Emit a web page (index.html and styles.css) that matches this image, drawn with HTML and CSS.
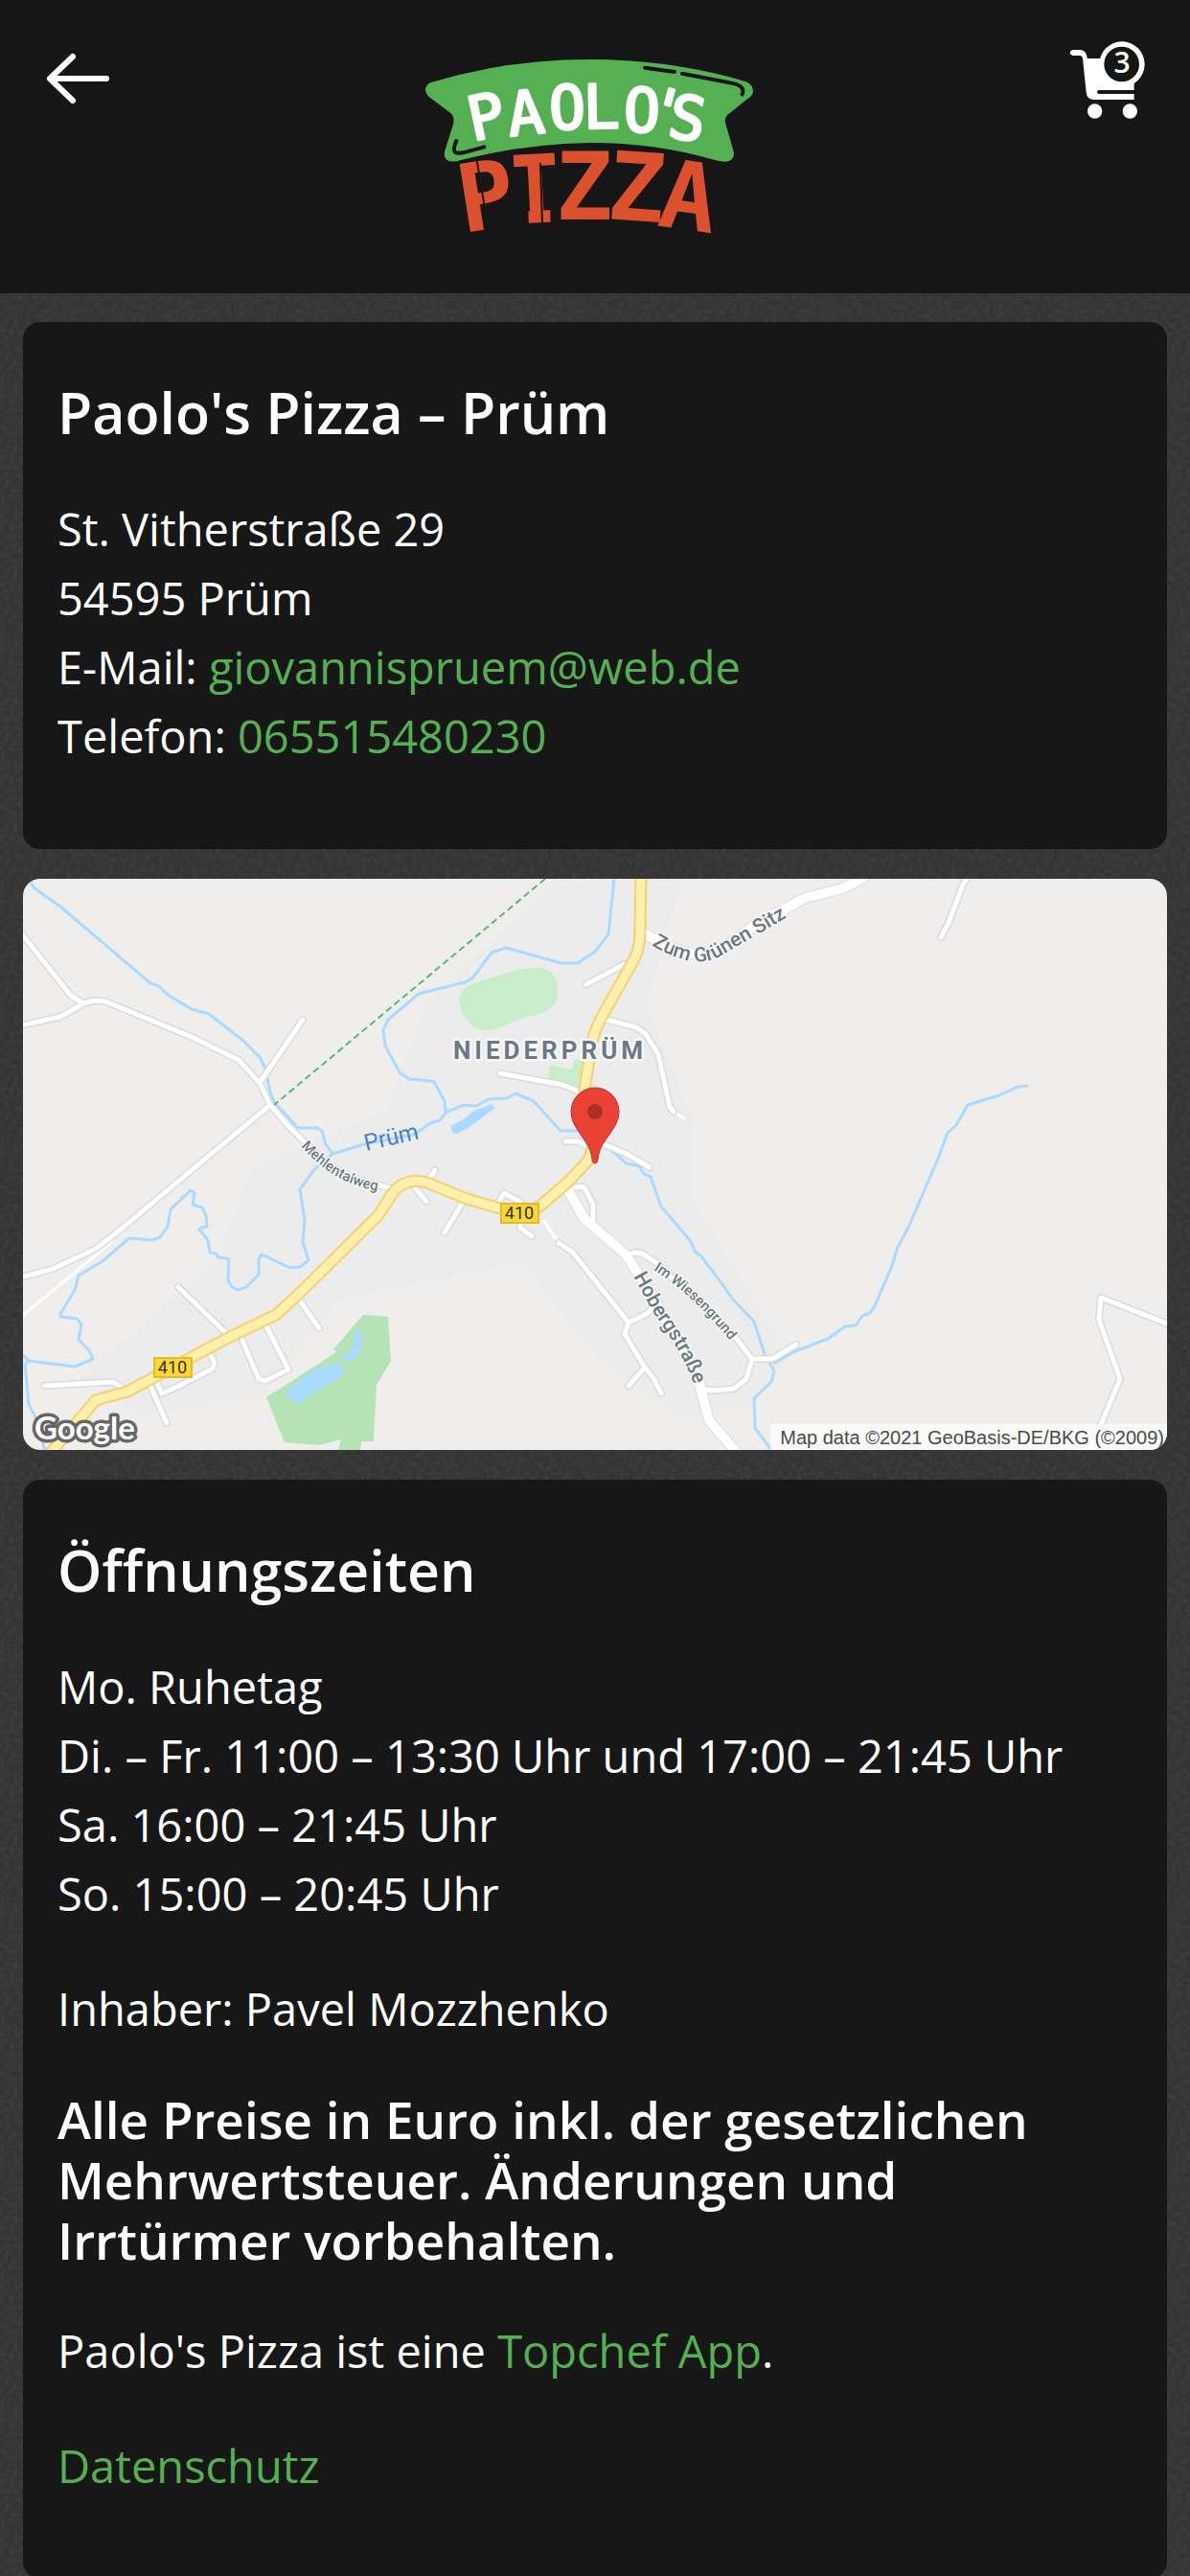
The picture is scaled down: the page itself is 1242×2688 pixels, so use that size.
FILE: index.html
```
<!DOCTYPE html>
<html lang="de">

<head>
	<meta charset="UTF-8" />
	<meta name="viewport" content="width=device-width,initial-scale=1" />
	<title>Paolo's Pizza – Prüm</title>
	<link rel="stylesheet" href="styles.css">
</head>

<body>
	<header class="topbar">
		<button class="icon-btn" type="button" aria-label="Zurück">
			<svg class="icon-back" viewBox="0 0 72 60" aria-hidden="true">
				<path d="M65 30H6M30 7L6 30L30 53" />
			</svg>
		</button>

		<svg class="logo" viewBox="18 0 1110 600" role="img" aria-label="Paolo's Pizza">
			<path class="logo-banner" d="M62 107Q300 36 555 36Q815 36 1046 106Q1068 114 1068 137Q1066 150 1050 160L990 208Q978 218 981 234L1008 328Q1008 354 984 356Q965 357 940 349Q760 297 560 297Q350 300 150 352Q125 360 108 350Q98 340 103 322L130 236Q132 214 122 205L52 152Q42 142 42 130Q44 112 62 107Z" />
			<path class="logo-line" d="M729 62L822 75M846 80L1010 112Q1044 122 1034 145" />
			<path class="logo-line" d="M139 291Q128 315 134 325Q140 332 160 328L226 310" />
			<text class="logo-name" x="190 306 431 537 661 722 795" y="292 276 256 252 260 248 276" rotate="-12 -6 -2 -1 2 15 10">PAOLO'S</text>
			<text class="logo-pizza" x="160 304" y="580 552" rotate="-9 -3">PI</text>
			<path class="logo-cut" d="M312 396L360 393L366 566H322ZM430 389L470 386V560H434Z" />
			<text class="logo-pizza" x="450 608 764" y="538 534 556" rotate="0 4 8">ZZA</text>
			<path class="logo-line thin" d="M203 352L240 574M402 362L408 550" />
		</svg>

		<button class="icon-btn cart" type="button" aria-label="Warenkorb">
			<svg class="icon-cart" viewBox="105 65 240 250" aria-hidden="true">
				<path d="M116 94H140Q158 96 162 121H308V250H182Q160 250 158 226L147 121Q146 112 137 112H116Q107 109 107 103Q108 95 116 94Z" />
				<path class="cut" d="M310 220H198Q192 222 192 226Q193 232 198 232H310" />
				<circle cx="185" cy="286" r="23" />
				<circle cx="295" cy="286" r="23" />
				<circle cx="270" cy="139" r="71" />
				<circle class="cut" cx="269" cy="139" r="55" />
				<text class="cart-count" x="270" y="165" text-anchor="middle">3</text>
			</svg>
		</button>
	</header>

	<main class="content">
		<section class="card">
			<h1>Paolo's Pizza – Prüm</h1>
			<p>
				St. Vitherstraße 29<br>
				54595 Prüm<br>
				E-Mail: <a href="mailto:giovannispruem@web.de">giovannispruem@web.de</a><br>
				Telefon: <a href="tel:065515480230">065515480230</a>
			</p>
		</section>

		<svg class="map" viewBox="0 0 1194 596" role="img" aria-label="Karte von Niederprüm">
			<defs>
				<path id="main-road" d="M645 -6L644 54Q644 70 639 82L604 144Q596 160 594 170L586 220L597 270Q592 290 589 295L568 317L539 342Q530 348 519 348L498 344L463 334L424 318Q408 312 396 319Q391 321 386 328L371 351L286 435L264 455L214 479L109 535L76 544L28 600" />
				<path id="sitz" d="M656 69Q700 96 727 81L796 41" />
				<path id="mehlen" d="M290 279Q328 322 376 326" />
				<path id="hoberg" d="M637 415L660 456Q692 500 701 530" />
				<path id="wiesen" d="M658 408Q702 436 742 487" />
				<g id="streets">
					<path d="M0 59L50 122L63 130M-2 153L39 144L63 130L75 127L86 128L176 165L225 189L247 213L258 236L278 259L291 272Q330 315 373 320L384 323" />
					<path d="M247 213L292 147M258 236L98 369L76 386L31 407L-2 416" />
					<path d="M588 110L628 89M609 147L640 155L650 162L663 183L675 238L679 243M498 203L563 215L583 223M566 274H579L589 279M606 277L628 286L654 301" />
					<path d="M986 -2L981 6L966 46L958 61M1196 465L1125 437L1123 460L1145 522L1113 598" />
					<path d="M458 339L440 369M409 322L421 337M423 314L430 304M497 337L502 328L519 337M519 352V364L531 373" />
					<path d="M559 380L573 389L632 463L628 475L649 510L658 521L666 537M649 510L632 529M632 463L651 454L659 445" />
					<path d="M576 322L584 321L587 324L595 340V357M632 392L638 390L646 391L659 399L744 479L761 501H779L784 500L807 486M761 501L755 522L742 532L719 534L710 532" />
					<path d="M162 426L213 475M228 479L246 522L253 524L277 512L253 465M288 439L309 469M132 527L150 568M195 495L200 505L198 511L163 529L145 537L138 522M23 529L94 525L103 531" />
				</g>
				<g id="wide-streets">
					<path d="M649 57Q690 82 714 78Q730 75 763 49L816 20L856 10L878 -2" />
					<path d="M569 325L586 355L629 392L659 439L704 519L716 565L746 600" />
				</g>
			</defs>

			<rect class="land" width="1194" height="596" />
			<path class="town" d="M690 0H560L420 130L380 240L240 300L200 400L60 520L120 560L250 540L330 440L520 400L600 500L680 560L760 550L800 500L700 340L700 250L650 130Z" />

			<!-- parks -->
			<path class="field" d="M476 107L516 95Q558 85 558 115Q560 132 543 140L523 145L496 156Q464 166 455 129Q455 114 476 107Z" />
			<path class="field" d="M550 194L573 199L575 188L585 190L582 218L548 209Z" />
			<path class="park" d="M355 455L381 457L384 503L369 528L366 587H353L352 598H328L332 585L309 591L273 588L254 541L327 494L324 491Z" />

			<!-- water -->
			<g class="lake">
				<path d="M349 469L353 470V492L343 505L333 500V497L343 492L344 484Z" />
				<path d="M273 536L304 512L329 505L335 511L333 519L318 528L298 539L289 548L283 546Z" />
				<path d="M447 258L461 250L469 243L489 235L493 239L466 259L453 266L448 265Z" />
			</g>
			<g class="stream">
				<path d="M6 -2L11 9L39 29L133 109L142 112L151 121L176 136L194 141L230 169L247 186L253 198L258 223L263 234L287 260H307L312 263L316 277L323 287L356 277L408 267L425 255L435 252L441 244L460 236L473 237L486 230L505 229L514 224L533 232L561 263H583L609 279L630 297L643 300L648 308L655 311L666 342L696 377L702 390L707 393L724 415L741 439L763 462L775 499L784 513L781 525L763 542L764 573L781 596" />
				<path d="M783 506L806 493L840 480L858 467L869 466L876 456L884 453L888 448L907 404L913 384L924 364L955 292L965 265L974 257L986 236L1019 226L1038 217L1049 216" />
				<path d="M617 0L611 58L597 76L579 88H562L504 72L489 77L469 104L461 108L413 120L381 147L376 158L378 174L393 202L403 209L417 210L429 212L440 232L441 244" />
				<path d="M323 287L309 299L303 305L289 324L294 356L292 379L298 398L289 405L279 406L264 399L249 392L246 397V413L233 426L224 429L218 426L214 419L215 398L213 396L204 395L201 391L195 390L193 377L184 366L186 364L192 363L191 351L187 343L177 340L179 328L175 325L154 345L151 363L143 374L135 377L111 375L83 399L58 414L54 429L39 454V457L56 459L61 465L58 481L69 492L73 501L54 509L6 503L0 497M6 503L2 507L6 548L13 562L23 596" />
			</g>

			<!-- streets: casing first, then the fill -->
			<path class="lane" d="M98 371L89 382L-2 457M543 356L559 380M679 243L691 251" />
			<use class="casing" href="#streets" />
			<use class="casing wide" href="#wide-streets" />
			<use class="street" href="#streets" />
			<use class="street wide" href="#wide-streets" />
			<use class="main-casing" href="#main-road" />
			<use class="main-fill" href="#main-road" />
			<path class="border" d="M545 0L262 236" />

			<!-- road numbers -->
			<g class="shield">
				<rect x="137" y="500" width="39" height="20" />
				<rect x="499" y="339" width="39" height="20" />
				<text x="156" y="516">410</text>
				<text x="518" y="355">410</text>
			</g>

			<text class="place" x="449" y="188">NIEDERPRÜM</text>
			<text class="river" x="358" y="284" transform="rotate(-13 358 284)">Prüm</text>
			<text class="road-name"><textPath href="#sitz">Zum Grünen Sitz</textPath></text>
			<text class="road-name"><textPath href="#hoberg">Hobergstraße</textPath></text>
			<text class="road-name small"><textPath href="#mehlen">Mehlentalweg</textPath></text>
			<text class="road-name small"><textPath href="#wiesen">Im Wiesengrund</textPath></text>

			<path class="pin" d="M597 218A25 25 0 0 0 572 243C572 262 592 272 594 292Q594 297 597 297Q600 297 600 292C602 272 622 262 622 243A25 25 0 0 0 597 218Z" />
			<circle class="pin-dot" cx="597" cy="243" r="8" />

			<text class="google" x="12" y="585">Google</text>
			<rect class="credit-bg" x="780" y="569" width="414" height="27" />
			<text class="credit" x="1191" y="590">Map data ©2021 GeoBasis-DE/BKG (©2009)</text>
		</svg>

		<section class="card">
			<h2>Öffnungszeiten</h2>
			<p>
				Mo. Ruhetag<br>
				Di. – Fr. 11:00 – 13:30 Uhr und 17:00 – 21:45 Uhr<br>
				Sa. 16:00 – 21:45 Uhr<br>
				So. 15:00 – 20:45 Uhr
			</p>
			<p>Inhaber: Pavel Mozzhenko</p>
			<h3>Alle Preise in Euro inkl. der gesetzlichen Mehrwertsteuer. Änderungen und Irrtürmer vorbehalten.</h3>
			<p>Paolo's Pizza ist eine <a href="#">Topchef App</a>.</p>
			<p><a href="#">Datenschutz</a></p>
		</section>
	</main>
</body>

</html>
```
FILE: styles.css
```
* {
	box-sizing: border-box;
	margin: 0;
	padding: 0;
}

body {
	background-color: #343434;
	background-image: url("data:image/svg+xml,%3Csvg xmlns='http://www.w3.org/2000/svg' width='132' height='132'%3E%3Cfilter id='n'%3E%3CfeTurbulence type='fractalNoise' baseFrequency='.2' numOctaves='2' stitchTiles='stitch'/%3E%3CfeColorMatrix values='0 0 0 0 1 0 0 0 0 1 0 0 0 0 1 .09 0 0 0 -.03'/%3E%3C/filter%3E%3Crect width='132' height='132' filter='url(%23n)'/%3E%3C/svg%3E");
	color: #fff;
	font-family: 'Open Sans', 'Noto Sans', sans-serif;
	font-size: 47px;
	line-height: 72px;
}

a {
	color: #55b054;
	text-decoration: none;
}

/* header */
.topbar {
	display: grid;
	grid-template-columns: 1fr auto 1fr;
	align-items: start;
	min-height: 306px;
	padding: 42px 46px;
	background: #161616;
}

.icon-btn {
	justify-self: start;
	display: flex;
	border: none;
	background: none;
	cursor: pointer;
}

.icon-btn.cart {
	justify-self: end;
}

.icon-back {
	width: 72px;
	height: 60px;
	margin-top: 10px;
	fill: none;
	stroke: #fff;
	stroke-width: 6;
	stroke-linecap: round;
	stroke-linejoin: round;
}

.icon-cart {
	width: 80px;
	height: 84px;
	fill: #fff;
}

.icon-cart .cut {
	fill: #161616;
}

.cart-count {
	font: 600 90px 'Open Sans', sans-serif;
}

.logo {
	width: 370px;
	height: 200px;
	margin-top: 8px;
}

.logo-banner {
	fill: #55b054;
}

.logo-line {
	fill: none;
	stroke: #161616;
	stroke-width: 12;
	stroke-linecap: round;
}

.logo-line.thin {
	stroke-width: 6;
}

.logo-cut {
	fill: #161616;
}

.logo-name {
	fill: #fff;
	stroke: #fff;
	stroke-width: 8;
	stroke-linejoin: round;
	font: 400 190px 'DejaVu Sans Mono', monospace;
}

.logo-pizza {
	fill: #dc512d;
	font: 700 296px 'DejaVu Sans Mono', monospace;
}

/* content */
.content {
	display: flex;
	flex-direction: column;
	gap: 31px;
	padding: 30px 24px;
}

.card {
	padding: 52px 36px 34px;
	border-radius: 18px;
	background: #171717;
}

.card h1,
.card h2 {
	margin-bottom: 44px;
	font-size: 59px;
	font-weight: 600;
	line-height: 84px;
}

.card h3 {
	margin-bottom: 48px;
	font-size: 53px;
	font-weight: 600;
	line-height: 63px;
}

.card p {
	margin-bottom: 48px;
}

/* map */
.map {
	display: block;
	width: 100%;
	height: auto;
	border-radius: 18px;
	font-family: 'Roboto', sans-serif;
}

.land {
	fill: #efeeec;
}

.town {
	fill: #ececec;
}

.field {
	fill: #c9edca;
}

.park {
	fill: #b6e3b6;
}

.lake {
	fill: #aadaff;
}

.stream,
.lane,
.casing,
.street,
.main-casing,
.main-fill,
.border {
	fill: none;
	stroke-linejoin: round;
}

.stream {
	stroke: #aadaff;
	stroke-width: 3;
}

.lane {
	stroke: #fff;
	stroke-width: 3;
}

.casing {
	stroke: #dadadd;
	stroke-width: 8;
	stroke-linecap: round;
}

.casing.wide {
	stroke-width: 12;
}

.street {
	stroke: #fff;
	stroke-width: 5;
	stroke-linecap: round;
}

.street.wide {
	stroke-width: 10;
}

.main-casing {
	stroke: #f8d06a;
	stroke-width: 13;
}

.main-fill {
	stroke: #fff0ad;
	stroke-width: 9;
}

.border {
	stroke: #57b973;
	stroke-width: 2;
	stroke-dasharray: 7 4;
}

.shield rect {
	fill: #fdd835;
	stroke: #dfbb2e;
	stroke-width: 2;
}

.shield text {
	fill: #333;
	font-size: 18px;
	text-anchor: middle;
}

.place,
.river,
.road-name {
	paint-order: stroke;
	stroke: #f7f7f7;
	stroke-width: 5;
	stroke-linejoin: round;
}

.place {
	fill: #6b7889;
	font-size: 26px;
	font-weight: 700;
	letter-spacing: 4px;
}

.river {
	fill: #4b80c8;
	stroke: none;
	font-size: 24px;
}

.road-name {
	fill: #6b7880;
	font-size: 21px;
	font-weight: 500;
	stroke-width: 3;
}

.road-name.small {
	font-size: 15px;
}

.pin {
	fill: #ea4335;
	stroke: #b5332a;
	stroke-width: 1;
}

.pin-dot {
	fill: #ae2f27;
}

.google {
	paint-order: stroke;
	fill: #fff;
	stroke: #666;
	stroke-width: 7;
	stroke-linejoin: round;
	font-family: 'Lato', sans-serif;
	font-size: 33px;
	font-weight: 700;
}

.credit-bg {
	fill: #fff;
	opacity: .7;
}

.credit {
	fill: #4a4a4a;
	font-family: 'Liberation Sans', Arial, sans-serif;
	font-size: 20px;
	text-anchor: end;
}
```
